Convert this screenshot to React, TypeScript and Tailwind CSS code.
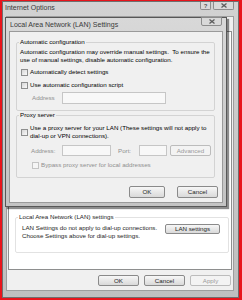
import type { ReactNode } from 'react'

// ── Small Win7-ish building blocks ───────────────────────────────────────────
function Btn({ children, className = '', disabled = false }: { children: ReactNode; className?: string; disabled?: boolean }) {
  return (
    <div
      className={
        'flex items-center justify-center rounded-[2px] border ' +
        (disabled
          ? 'border-[#bcbcbc] bg-[#f3f3f3] text-[#9a9a9a] '
          : 'border-[#8a8a8a] bg-linear-to-b from-[#f7f7f7] to-[#d9d9d9] text-[#1e1e1e] ') +
        className
      }
    >
      {children}
    </div>
  )
}

function Check({ disabled = false }: { disabled?: boolean }) {
  return (
    <span
      className={
        'inline-block w-[7px] h-[7px] shrink-0 border ' +
        (disabled ? 'border-[#c4c4c4] bg-[#f5f5f5]' : 'border-[#8e8f8f] bg-linear-to-br from-[#d6d6d6] to-[#fafafa]')
      }
    />
  )
}

function Field({ className = '' }: { className?: string }) {
  return <div className={'h-[11px] border border-[#c6c6c6] bg-[#f8f8f8] ' + className} />
}

function CloseGlyph() {
  return (
    <svg width="6" height="5" viewBox="0 0 6 5">
      <path d="M0.5 0.5 L5.5 4.5 M5.5 0.5 L0.5 4.5" stroke="#5c5c5c" strokeWidth="1.3" />
    </svg>
  )
}

export default function App() {
  return (
    <div className="relative w-[242px] h-[300px] overflow-hidden bg-[#e8141b] pt-px pl-[2px] pr-[3px] pb-[2px] font-['Liberation_Sans',Arial,sans-serif] text-[6.2px] leading-[8px] text-black">
      {/* ── Internet Options window ──────────────────────────────── */}
      <div className="h-full flex flex-col border border-[#6f6f6f] bg-linear-to-b from-[#d2d2d2] to-[#bfbfbf]">
        <div className="h-[14px] flex items-start justify-between pl-[2px] pr-[4px]">
          <span className="mt-px text-[7px] leading-[9px] text-[#3a3a3a]">Internet Options</span>
          <div className="flex gap-[2px]">
            <div className="w-[11px] h-[8px] flex items-center justify-center rounded-b-[2px] border border-t-0 border-[#8c8c8c] bg-[#d9d9d9] text-[6px] leading-[6px] text-[#555] font-bold">?</div>
            <div className="w-[21px] h-[8px] flex items-center justify-center rounded-b-[2px] border border-t-0 border-[#8c8c8c] bg-[#d9d9d9]">
              <CloseGlyph />
            </div>
          </div>
        </div>

        {/* client area */}
        <div className="flex-1 ml-[3px] mr-[4px] mb-[6px] flex flex-col bg-[#f0f0f0] border border-[#9d9d9d]">
          <div className="flex-1 mx-px mt-[14px] flex flex-col justify-end bg-white border border-[#8e8f8f]">
            <fieldset className="ml-[6px] mr-[2px] mb-[16px] pl-[3px] pr-[3px] pb-[12px] border border-[#e2e2e2] rounded-[2px]">
              <legend className="px-px -ml-px text-[#1e1e1e]">Local Area Network (LAN) settings</legend>
              <div className="pt-[3px] flex items-start justify-between">
                <div className="ml-[3px] flex flex-col whitespace-nowrap text-[#1e1e1e]">
                  <span>LAN Settings do not apply to dial-up connections.</span>
                  <span>Choose Settings above for dial-up settings.</span>
                </div>
                <Btn className="w-[55px] h-[10px] mr-[5px]">LAN settings</Btn>
              </div>
            </fieldset>
          </div>
          <div className="pt-[5px] pb-[4px] pr-[2px] flex justify-end gap-[5px]">
            <Btn className="w-[41px] h-[11px]">OK</Btn>
            <Btn className="w-[41px] h-[11px]">Cancel</Btn>
            <Btn className="w-[41px] h-[11px]" disabled>Apply</Btn>
          </div>
        </div>
      </div>

      {/* ── LAN Settings dialog (window over the window) ─────────── */}
      <div className="absolute left-[5px] top-[17px] w-[222px] h-[190px] flex flex-col border border-[#575757] bg-linear-to-b from-[#d8d8d8] to-[#c3c3c3] shadow-[2px_2px_1px_rgba(0,0,0,0.45)]">
        <div className="h-[13px] flex items-start justify-between pl-[4px] pr-[4px]">
          <span className="mt-[1.5px] text-[7px] leading-[9px] text-[#3a3a3a]">Local Area Network (LAN) Settings</span>
          <div className="-mt-px w-[21px] h-[9px] flex items-center justify-center rounded-b-[2px] border border-[#8c8c8c] bg-[#d9d9d9]">
            <CloseGlyph />
          </div>
        </div>

        <div className="flex-1 mx-[3px] mb-[3px] flex flex-col bg-[#f0f0f0] border border-[#9a9a9a]">
          {/* Automatic configuration */}
          <fieldset className="mt-[6px] ml-[6px] mr-[7px] pl-[3px] pr-[3px] pb-[6px] border border-[#d3d3d3] rounded-[2px]">
            <legend className="px-px -ml-px">Automatic configuration</legend>
            <div className="pt-[2px] flex flex-col whitespace-pre">
              <span>Automatic configuration may override manual settings.  To ensure the</span>
              <span>use of manual settings, disable automatic configuration.</span>
            </div>
            <div className="mt-[4px] ml-px flex items-center gap-[2px]">
              <Check />
              <span>Automatically detect settings</span>
            </div>
            <div className="mt-[5px] ml-px flex items-center gap-[2px]">
              <Check />
              <span>Use automatic configuration script</span>
            </div>
            <div className="mt-[3px] flex items-center">
              <span className="ml-[12px] w-[30px] text-[#8f8f8f]">Address</span>
              <Field className="w-[104px] h-[12px]" />
            </div>
          </fieldset>

          {/* Proxy server */}
          <fieldset className="ml-[6px] mr-[7px] pl-[3px] pr-[3px] pb-[8px] border border-[#d3d3d3] rounded-[2px]">
            <legend className="px-px -ml-px">Proxy server</legend>
            <div className="pt-[5px] ml-px flex items-center gap-[2px]">
              <Check />
              <div className="flex flex-col whitespace-nowrap">
                <span>Use a proxy server for your LAN (These settings will not apply to</span>
                <span>dial-up or VPN connections).</span>
              </div>
            </div>
            <div className="mt-[5px] flex items-center">
              <span className="ml-[11px] w-[31px] text-[#8f8f8f]">Address:</span>
              <Field className="w-[49px]" />
              <span className="ml-[7px] w-[21px] text-[#8f8f8f]">Port:</span>
              <Field className="w-[28px]" />
              <Btn className="ml-[3px] w-[41px] h-[11px]" disabled>Advanced</Btn>
            </div>
            <div className="mt-[5px] ml-[12px] flex items-center gap-[2px]">
              <Check disabled />
              <span className="text-[#8f8f8f]">Bypass proxy server for local addresses</span>
            </div>
          </fieldset>

          <div className="mt-[8px] pr-[4px] flex justify-end gap-[12px]">
            <Btn className="w-[36px] h-[12px]">OK</Btn>
            <Btn className="w-[41px] h-[12px]">Cancel</Btn>
          </div>
        </div>
      </div>
    </div>
  )
}
